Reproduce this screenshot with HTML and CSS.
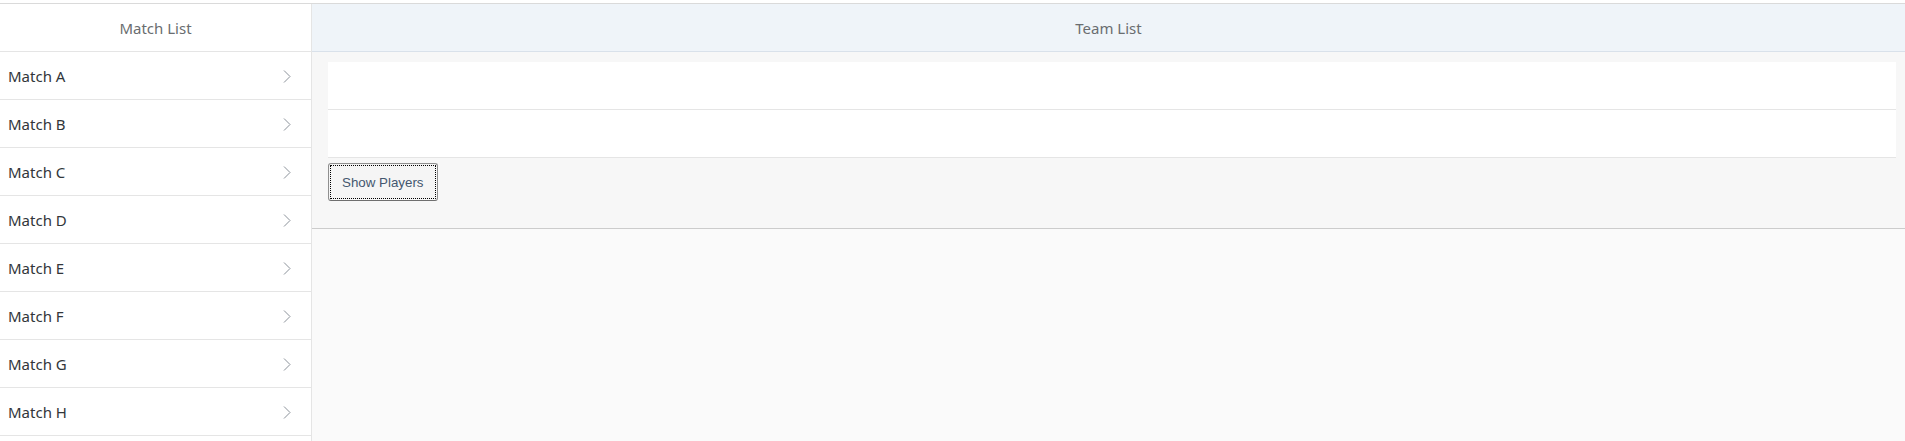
FILE: index.html
```html
<!DOCTYPE html>
<html lang="en">
<head>
<meta charset="utf-8">
<title>Matches</title>
<link rel="stylesheet" href="styles.css">
</head>
<body>
<div class="app">
  <div class="split">
    <aside class="master">
      <div class="pane-header">Match List</div>
      <ul class="match-list">
        <li class="match-item"><span>Match A</span><svg class="chev" viewBox="0 0 8 13"><path d="M1 0.5 L7 6.5 L1 12.5"/></svg></li>
        <li class="match-item"><span>Match B</span><svg class="chev" viewBox="0 0 8 13"><path d="M1 0.5 L7 6.5 L1 12.5"/></svg></li>
        <li class="match-item"><span>Match C</span><svg class="chev" viewBox="0 0 8 13"><path d="M1 0.5 L7 6.5 L1 12.5"/></svg></li>
        <li class="match-item"><span>Match D</span><svg class="chev" viewBox="0 0 8 13"><path d="M1 0.5 L7 6.5 L1 12.5"/></svg></li>
        <li class="match-item"><span>Match E</span><svg class="chev" viewBox="0 0 8 13"><path d="M1 0.5 L7 6.5 L1 12.5"/></svg></li>
        <li class="match-item"><span>Match F</span><svg class="chev" viewBox="0 0 8 13"><path d="M1 0.5 L7 6.5 L1 12.5"/></svg></li>
        <li class="match-item"><span>Match G</span><svg class="chev" viewBox="0 0 8 13"><path d="M1 0.5 L7 6.5 L1 12.5"/></svg></li>
        <li class="match-item"><span>Match H</span><svg class="chev" viewBox="0 0 8 13"><path d="M1 0.5 L7 6.5 L1 12.5"/></svg></li>
      </ul>
    </aside>
    <main class="detail">
      <div class="pane-header detail-header">Team List</div>
      <section class="team-section">
        <ul class="team-list">
          <li class="team-item"></li>
          <li class="team-item"></li>
        </ul>
        <button class="show-btn" type="button">Show Players</button>
      </section>
    </main>
  </div>
</div>
</body>
</html>
```

FILE: styles.css
```css
html, body {
  margin: 0;
  padding: 0;
  height: 100%;
  overflow: hidden;
  background: #ffffff;
}

body {
  font-family: "Noto Sans", "Open Sans", Arial, sans-serif;
  font-size: 15px;
  color: #32363a;
}

.app {
  height: 100%;
  padding-top: 3px;
  box-sizing: border-box;
}

.split {
  display: flex;
  height: 100%;
  border-top: 1px solid #dadada;
}

.master {
  width: 311px;
  flex: none;
  background: #ffffff;
  border-right: 1px solid #e5e5e5;
}

.pane-header {
  height: 47px;
  display: flex;
  align-items: center;
  justify-content: center;
  color: #6a6d70;
  border-bottom: 1px solid #e5e5e5;
}

.match-list {
  list-style: none;
  margin: 0;
  padding: 0;
}

.match-item {
  height: 47px;
  display: flex;
  align-items: center;
  justify-content: space-between;
  padding: 0 20px 0 8px;
  border-bottom: 1px solid #e5e5e5;
  color: #32363a;
}

.chev {
  width: 8px;
  height: 13px;
  margin-top: 1px;
}

.chev path {
  fill: none;
  stroke: #8a9199;
  stroke-width: 1;
}

.detail {
  flex: 1;
  background: #fafafa;
  min-width: 0;
}

.detail-header {
  background: #eff4f9;
  border-bottom: 1px solid #d9e1ea;
}

.team-section {
  background: #f7f7f7;
  padding: 10px 9px 27px 16px;
  border-bottom: 1px solid #cccccc;
}

.team-list {
  list-style: none;
  margin: 0;
  padding: 0;
}

.team-item {
  height: 47px;
  background: #ffffff;
  border-bottom: 1px solid #e5e5e5;
}

.show-btn {
  position: relative;
  display: block;
  margin-top: 5px;
  height: 38px;
  padding: 0 13px;
  font-family: "Liberation Sans", Arial, sans-serif;
  font-size: 13.333px;
  color: #44576f;
  background: #f5f5f5;
  border: 1px solid #8f8f8f;
  border-bottom-color: #6f6f6f;
  border-radius: 3px;
}

.show-btn::after {
  content: "";
  position: absolute;
  inset: 1px;
  border: 1px dotted #000000;
  border-radius: 1px;
}
```
